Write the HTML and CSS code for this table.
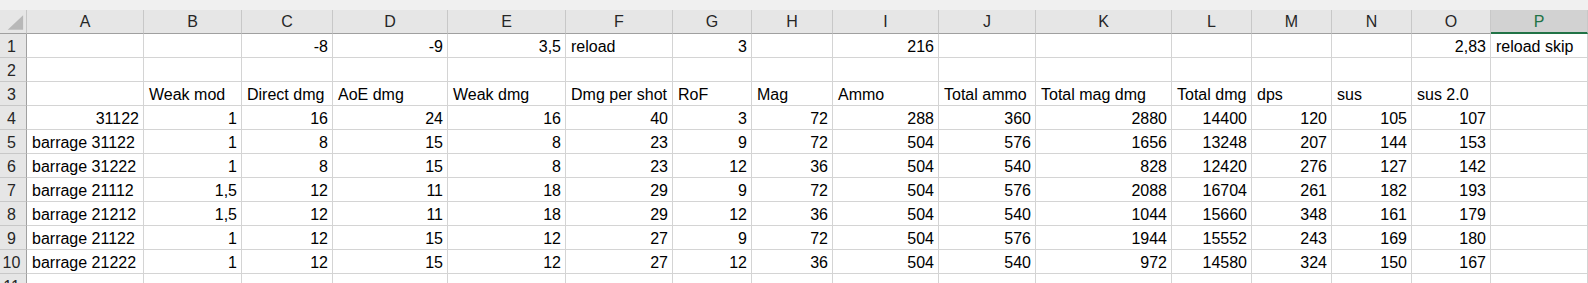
FILE: index.html
```html
<!DOCTYPE html>
<html>
<head>
<meta charset="utf-8">
<link rel="stylesheet" href="styles.css">
</head>
<body>
<div class="sheet">
  <div class="topstrip"></div>
  <div class="grid">
    <div class="corner"><svg width="27" height="24" viewBox="0 0 27 24"><polygon points="8,20 24,5 24,20" fill="#b8b8b8"/></svg></div>
    <div class="ch">A</div><div class="ch">B</div><div class="ch">C</div><div class="ch">D</div><div class="ch">E</div><div class="ch">F</div><div class="ch">G</div><div class="ch">H</div><div class="ch">I</div><div class="ch">J</div><div class="ch">K</div><div class="ch">L</div><div class="ch">M</div><div class="ch">N</div><div class="ch">O</div><div class="ch sel">P</div>

    <div class="rh">1</div>
    <div class="c"></div><div class="c"></div><div class="c r">-8</div><div class="c r">-9</div><div class="c r">3,5</div><div class="c">reload</div><div class="c r">3</div><div class="c"></div><div class="c r">216</div><div class="c"></div><div class="c"></div><div class="c"></div><div class="c"></div><div class="c"></div><div class="c r">2,83</div><div class="c">reload skip</div>

    <div class="rh">2</div>
    <div class="c"></div><div class="c"></div><div class="c"></div><div class="c"></div><div class="c"></div><div class="c"></div><div class="c"></div><div class="c"></div><div class="c"></div><div class="c"></div><div class="c"></div><div class="c"></div><div class="c"></div><div class="c"></div><div class="c"></div><div class="c"></div>

    <div class="rh">3</div>
    <div class="c"></div><div class="c">Weak mod</div><div class="c">Direct dmg</div><div class="c">AoE dmg</div><div class="c">Weak dmg</div><div class="c">Dmg per shot</div><div class="c">RoF</div><div class="c">Mag</div><div class="c">Ammo</div><div class="c">Total ammo</div><div class="c">Total mag dmg</div><div class="c">Total dmg</div><div class="c">dps</div><div class="c">sus</div><div class="c">sus 2.0</div><div class="c"></div>

    <div class="rh">4</div>
    <div class="c r">31122</div><div class="c r">1</div><div class="c r">16</div><div class="c r">24</div><div class="c r">16</div><div class="c r">40</div><div class="c r">3</div><div class="c r">72</div><div class="c r">288</div><div class="c r">360</div><div class="c r">2880</div><div class="c r">14400</div><div class="c r">120</div><div class="c r">105</div><div class="c r">107</div><div class="c"></div>

    <div class="rh">5</div>
    <div class="c">barrage 31122</div><div class="c r">1</div><div class="c r">8</div><div class="c r">15</div><div class="c r">8</div><div class="c r">23</div><div class="c r">9</div><div class="c r">72</div><div class="c r">504</div><div class="c r">576</div><div class="c r">1656</div><div class="c r">13248</div><div class="c r">207</div><div class="c r">144</div><div class="c r">153</div><div class="c"></div>

    <div class="rh">6</div>
    <div class="c">barrage 31222</div><div class="c r">1</div><div class="c r">8</div><div class="c r">15</div><div class="c r">8</div><div class="c r">23</div><div class="c r">12</div><div class="c r">36</div><div class="c r">504</div><div class="c r">540</div><div class="c r">828</div><div class="c r">12420</div><div class="c r">276</div><div class="c r">127</div><div class="c r">142</div><div class="c"></div>

    <div class="rh">7</div>
    <div class="c">barrage 21112</div><div class="c r">1,5</div><div class="c r">12</div><div class="c r">11</div><div class="c r">18</div><div class="c r">29</div><div class="c r">9</div><div class="c r">72</div><div class="c r">504</div><div class="c r">576</div><div class="c r">2088</div><div class="c r">16704</div><div class="c r">261</div><div class="c r">182</div><div class="c r">193</div><div class="c"></div>

    <div class="rh">8</div>
    <div class="c">barrage 21212</div><div class="c r">1,5</div><div class="c r">12</div><div class="c r">11</div><div class="c r">18</div><div class="c r">29</div><div class="c r">12</div><div class="c r">36</div><div class="c r">504</div><div class="c r">540</div><div class="c r">1044</div><div class="c r">15660</div><div class="c r">348</div><div class="c r">161</div><div class="c r">179</div><div class="c"></div>

    <div class="rh">9</div>
    <div class="c">barrage 21122</div><div class="c r">1</div><div class="c r">12</div><div class="c r">15</div><div class="c r">12</div><div class="c r">27</div><div class="c r">9</div><div class="c r">72</div><div class="c r">504</div><div class="c r">576</div><div class="c r">1944</div><div class="c r">15552</div><div class="c r">243</div><div class="c r">169</div><div class="c r">180</div><div class="c"></div>

    <div class="rh">10</div>
    <div class="c">barrage 21222</div><div class="c r">1</div><div class="c r">12</div><div class="c r">15</div><div class="c r">12</div><div class="c r">27</div><div class="c r">12</div><div class="c r">36</div><div class="c r">504</div><div class="c r">540</div><div class="c r">972</div><div class="c r">14580</div><div class="c r">324</div><div class="c r">150</div><div class="c r">167</div><div class="c"></div>

    <div class="rh">11</div>
    <div class="c"></div><div class="c"></div><div class="c"></div><div class="c"></div><div class="c"></div><div class="c"></div><div class="c"></div><div class="c"></div><div class="c"></div><div class="c"></div><div class="c"></div><div class="c"></div><div class="c"></div><div class="c"></div><div class="c"></div><div class="c"></div>
  </div>
</div>
</body>
</html>
```

FILE: styles.css
```css
html, body {
  margin: 0;
  padding: 0;
  background: #ffffff;
}
body {
  font-family: "Liberation Sans", Arial, sans-serif;
  font-size: 16px;
  color: #000000;
  overflow: hidden;
}
.sheet {
  width: 1588px;
  height: 283px;
  overflow: hidden;
  background: #ffffff;
}
.topstrip {
  height: 10px;
  background: #f0f0f0;
}
.grid {
  display: grid;
  grid-template-columns: 27px 117px 98px 91px 115px 118px 107px 79px 81px 106px 97px 136px 80px 80px 80px 79px 97px;
  grid-auto-rows: 24px;
}
.grid > div {
  box-sizing: border-box;
  height: 24px;
  display: flex;
  align-items: flex-end;
  line-height: 18px;
  white-space: nowrap;
}
.corner {
  background: #e6e6e6;
  border-right: 1px solid #c6c6c6;
  border-bottom: 1px solid #a0a0a0;
  align-items: stretch !important;
}
.corner svg {
  display: block;
}
.ch {
  background: #e6e6e6;
  border-right: 1px solid #c8c8c8;
  border-bottom: 1px solid #a0a0a0;
  justify-content: center;
  color: #262626;
  padding-bottom: 2px;
}
.ch.sel {
  background: #d2d2d2;
  color: #217346;
  border-bottom: 2px solid #217346;
  padding-bottom: 1px;
}
.rh {
  background: #e6e6e6;
  border-right: 1px solid #a0a0a0;
  border-bottom: 1px solid #c8c8c8;
  justify-content: center;
  color: #262626;
  padding-right: 3px;
  padding-bottom: 1px;
}
.c {
  border-right: 1px solid #d4d4d4;
  border-bottom: 1px solid #d4d4d4;
  padding: 0 4px 1px 5px;
}
.c.r {
  justify-content: flex-end;
}
```
